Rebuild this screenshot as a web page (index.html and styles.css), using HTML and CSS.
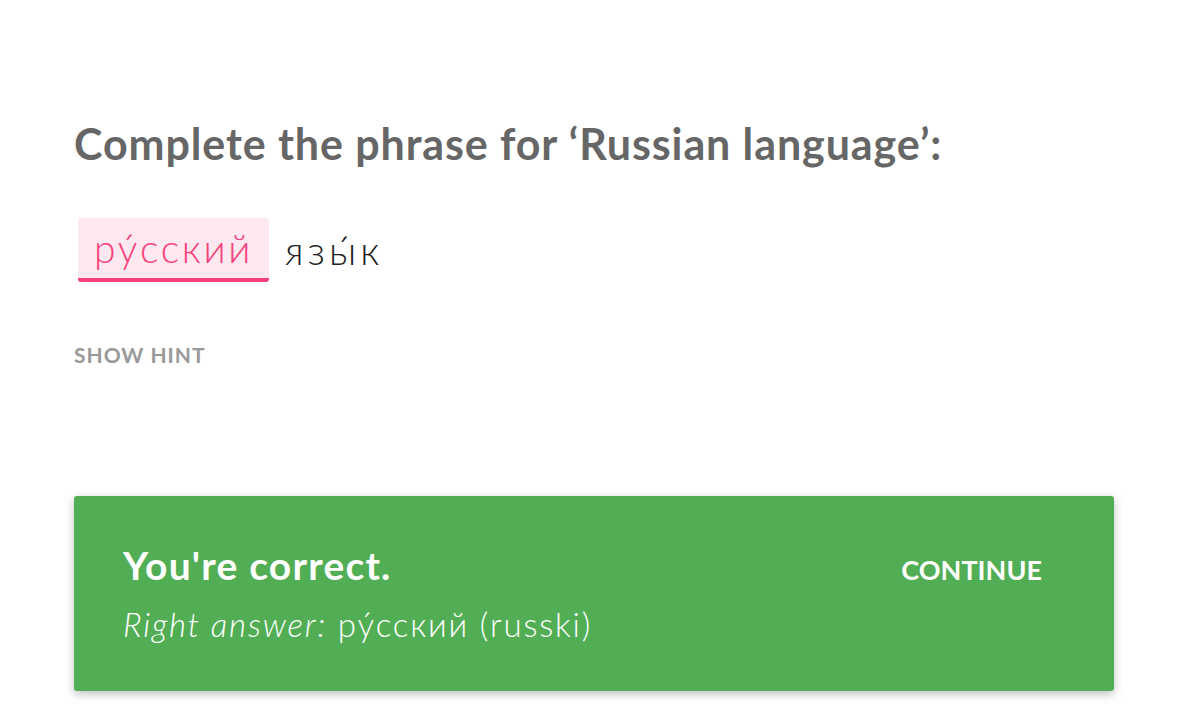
FILE: index.html
```html
<!DOCTYPE html>
<html lang="en">
<head>
<meta charset="utf-8">
<title>Complete the phrase</title>
<link rel="stylesheet" href="styles.css">
</head>
<body>
<main class="page">
  <h1 class="prompt">Complete the phrase for ‘Russian language’:</h1>
  <div class="phrase">
    <span class="answer">ру́сский</span>
    <span class="word">язы́к</span>
  </div>
  <button class="hint" type="button">SHOW HINT</button>
  <section class="result">
    <div class="result-text">
      <p class="result-title">You're correct.</p>
      <p class="result-answer"><em>Right answer:</em> ру́сский (russki)</p>
    </div>
    <button class="continue" type="button">CONTINUE</button>
  </section>
</main>
</body>
</html>
```

FILE: styles.css
```css
* { box-sizing: border-box; }
html, body { margin: 0; background: #ffffff; }
body {
  font-family: "Lato", "Noto Sans", sans-serif;
  width: 1186px;
  height: 722px;
  overflow: hidden;
}
.page {
  padding: 117px 72px 0 74px;
  display: flex;
  flex-direction: column;
  align-items: flex-start;
}
.prompt {
  margin: 0;
  font-size: 43px;
  font-weight: 700;
  color: #666666;
  line-height: 54px;
  letter-spacing: 0.9px;
}
.phrase {
  margin-top: 47px;
  display: flex;
  align-items: center;
  gap: 16px;
  padding-left: 4px;
}
.answer {
  display: inline-block;
  height: 64px;
  padding: 0 16px 0 16px;
  background: #fde8ef;
  border-bottom: 4px solid #f8407b;
  border-radius: 3px;
  color: #f8407b;
  font-size: 39px;
  font-weight: 300;
  line-height: 60px;
  letter-spacing: 2.7px;
}
.word {
  color: #222222;
  font-size: 39px;
  font-weight: 300;
  line-height: 60px;
  letter-spacing: 4px;
}
.hint {
  margin-top: 60px;
  padding: 0;
  border: 0;
  background: none;
  font-family: inherit;
  font-size: 21px;
  font-weight: 700;
  color: #999999;
  letter-spacing: 1px;
}
.result {
  margin-top: 129px;
  align-self: stretch;
  height: 195px;
  background: #52ae55;
  border-radius: 3px;
  box-shadow: 0 3px 10px rgba(0, 0, 0, 0.25);
  display: flex;
  justify-content: space-between;
  align-items: flex-start;
  padding: 40px 72px 0 49px;
}
.result-text p { margin: 0; color: #ffffff; }
.result-title {
  font-size: 39px;
  font-weight: 700;
  line-height: 58px;
  letter-spacing: 1.2px;
}
.result-answer {
  margin-top: 8px !important;
  font-size: 33px;
  font-weight: 300;
  line-height: 44px;
  letter-spacing: 1.8px;
}
.result-answer em { font-style: italic; }
.continue {
  margin-top: 14px;
  padding: 0;
  border: 0;
  background: none;
  font-family: inherit;
  color: #ffffff;
  font-size: 27px;
  font-weight: 700;
  line-height: 40px;
}
```
